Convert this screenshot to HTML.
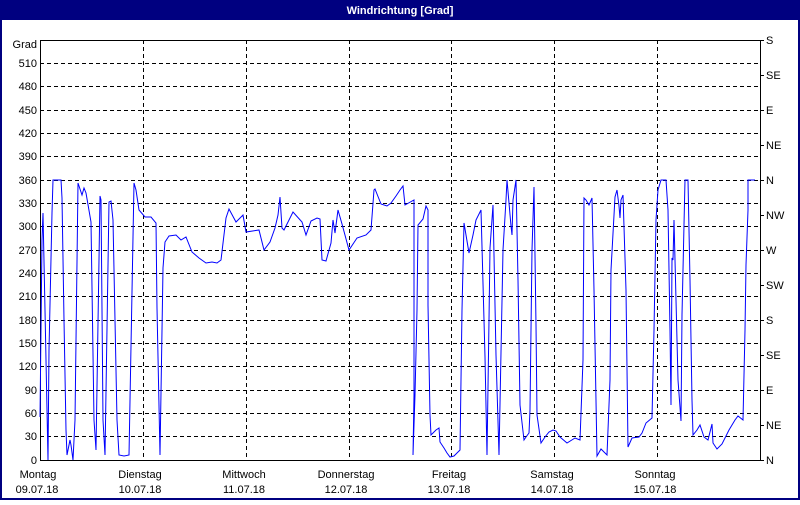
<!DOCTYPE html>
<html><head><meta charset="utf-8"><style>
body{margin:0;width:800px;height:500px;overflow:hidden;background:#fff;font-family:"Liberation Sans",sans-serif}
</style></head><body>
<svg width="800" height="500" xmlns="http://www.w3.org/2000/svg" font-family="Liberation Sans, sans-serif" font-size="11">
<rect x="0" y="0" width="800" height="500" fill="#000080"/>
<rect x="2" y="20" width="796" height="478" fill="#fff"/>
<text x="400" y="14" fill="#fff" font-weight="bold" text-anchor="middle">Windrichtung [Grad]</text>
<g stroke="#000" stroke-width="1" stroke-dasharray="4,3" fill="none">
<path d="M40 63.5H760M40 86.5H760M40 110.5H760M40 133.5H760M40 156.5H760M40 180.5H760M40 203.5H760M40 226.5H760M40 250.5H760M40 273.5H760M40 296.5H760M40 320.5H760M40 343.5H760M40 366.5H760M40 390.5H760M40 413.5H760M40 436.5H760"/>
<path d="M143.5 40V460M246.5 40V460M349.5 40V460M451.5 40V460M554.5 40V460M657.5 40V460"/>
</g>
<path d="M40.5 40V460.5H760.5V40M40 40.5H760" stroke="#000" fill="none"/>
<path d="M760 75.5h4M760 110.5h4M760 145.5h4M760 180.5h4M760 215.5h4M760 250.5h4M760 285.5h4M760 320.5h4M760 355.5h4M760 390.5h4M760 425.5h4M760 460.5h4M760 40.5h4" stroke="#000"/>
<g text-anchor="end" fill="#000">
<text x="37" y="48">Grad</text><text x="37" y="67">510</text><text x="37" y="90">480</text><text x="37" y="114">450</text><text x="37" y="137">420</text><text x="37" y="160">390</text><text x="37" y="184">360</text><text x="37" y="207">330</text><text x="37" y="230">300</text><text x="37" y="254">270</text><text x="37" y="277">240</text><text x="37" y="300">210</text><text x="37" y="324">180</text><text x="37" y="347">150</text><text x="37" y="370">120</text><text x="37" y="394">90</text><text x="37" y="417">60</text><text x="37" y="440">30</text><text x="37" y="464">0</text>
</g>
<g fill="#000">
<text x="766" y="44">S</text><text x="766" y="79">SE</text><text x="766" y="114">E</text><text x="766" y="149">NE</text><text x="766" y="184">N</text><text x="766" y="219">NW</text><text x="766" y="254">W</text><text x="766" y="289">SW</text><text x="766" y="324">S</text><text x="766" y="359">SE</text><text x="766" y="394">E</text><text x="766" y="429">NE</text><text x="766" y="464">N</text>
</g>
<g text-anchor="middle" fill="#000">
<text x="38" y="478">Montag</text><text x="37" y="493">09.07.18</text>
<text x="140" y="478">Dienstag</text><text x="140" y="493">10.07.18</text>
<text x="244" y="478">Mittwoch</text><text x="244" y="493">11.07.18</text>
<text x="346" y="478">Donnerstag</text><text x="346" y="493">12.07.18</text>
<text x="449" y="478">Freitag</text><text x="449" y="493">13.07.18</text>
<text x="552" y="478">Samstag</text><text x="552" y="493">14.07.18</text>
<text x="655" y="478">Sonntag</text><text x="655" y="493">15.07.18</text>
</g>
<polyline fill="none" stroke="#0000ff" stroke-width="1" points="40,417 42,240 43,213 45,310 48,460 49,350 52,213 53,180 61,180 62,198 64,320 66,430 67,455 70,440 71,445 73,460 75,420 78,183 79,186 82,195 84,188 86,193 91,222 94,420 96,450 100,196 101,200 103,420 105,455 109,202 111,201 113,220 117,420 119,455 124,456 129,455 134,183 136,190 139,210 145,217 151,217 156,223 157,308 160,455 163,268 165,242 169,236 176,235 181,240 186,237 192,252 199,258 206,263 212,262 217,263 221,260 226,218 229,209 236,222 243,215 246,232 259,230 264,250 270,242 275,228 278,215 280,197 282,228 284,230 293,212 302,222 306,235 311,221 317,218 320,219 322,260 326,261 331,243 333,220 335,233 338,210 342,224 349,250 357,238 366,235 371,230 374,190 375,189 381,204 387,206 391,203 396,196 400,190 403,186 405,205 414,200 414,395 413,455 415,395 417,310 418,225 423,219 426,206 428,210 428,305 430,415 431,435 436,430 439,428 440,442 444,448 447,453 450,457 454,456 457,453 460,450 462,310 464,223 469,253 473,235 476,220 481,210 485,357 487,455 489,320 490,248 493,205 496,355 499,455 503,250 506,200 507,180 511,226 512,235 513,200 516,180 518,280 520,405 524,440 526,437 529,433 530,410 532,250 534,187 536,325 537,415 541,443 545,437 549,432 553,430 556,431 560,437 567,443 575,438 580,440 583,360 584,198 586,200 589,205 592,198 594,290 597,456 601,449 607,455 610,380 611,270 615,197 617,190 619,206 620,218 621,200 623,195 626,290 628,447 632,438 639,437 642,433 646,423 652,418 654,330 656,220 658,190 661,180 666,180 668,210 670,330 671,405 672,258 673,260 674,220 676,300 678,380 681,421 682,315 685,180 688,180 690,280 692,400 693,435 697,430 700,425 704,437 708,440 712,424 713,443 717,449 722,444 729,430 735,420 738,416 743,420 745,330 746,265 748,210 748,180 755,180"/>
</svg>
</body></html>
